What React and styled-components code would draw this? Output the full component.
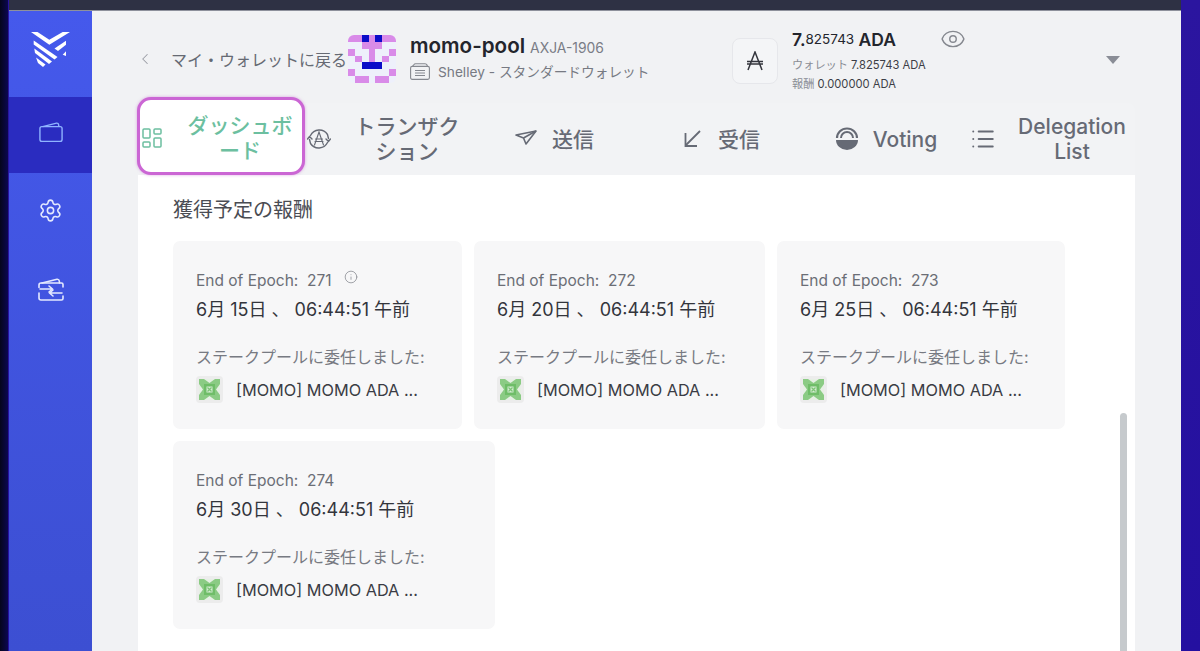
import React from 'react';
import styled, { createGlobalStyle } from 'styled-components';
import { ChevronLeft, Eye, LayoutDashboard, List, Info, Settings } from 'lucide-react';

const GlobalStyle = createGlobalStyle`
  html, body {
    margin: 0;
    padding: 0;
    background: #1a0f8c;
    font-family: "Inter", "Noto Sans CJK JP", sans-serif;
  }
  * { box-sizing: border-box; }
`;

const Desktop = styled.div`
  width: 1200px;
  height: 651px;
  overflow: hidden;
  padding: 0 19px 0 9px;
  background:
    linear-gradient(90deg, #05051c 0, #0b0750 8px, transparent 8px),
    linear-gradient(180deg, #2b159f, #2410a0);
`;

const AppWindow = styled.div`
  height: 651px;
  display: flex;
  flex-direction: column;
`;

const TitleBar = styled.div`
  height: 11px;
  flex: none;
  background: #2e3144;
  border-bottom: 1px solid #8e919c;
`;

const Body = styled.div`
  flex: 1;
  min-height: 0;
  display: flex;
`;

const Sidebar = styled.nav`
  width: 83px;
  flex: none;
  background: linear-gradient(180deg, #4559ec, #3c4fd2);
  display: flex;
  flex-direction: column;
`;

const LogoBox = styled.div`
  height: 86px;
  display: flex;
  justify-content: center;
  padding-top: 20px;
`;

const NavItem = styled.div`
  height: ${({ $h }) => $h}px;
  display: flex;
  align-items: center;
  justify-content: center;
  padding-bottom: ${({ $active }) => ($active ? '5px' : '0')};
  color: ${({ $active }) => ($active ? '#8fb4ff' : '#e4e9ff')};
  background: ${({ $active }) => ($active ? '#2a2cc0' : 'transparent')};
`;

const Main = styled.main`
  flex: 1;
  min-width: 0;
  background: #f1f2f4;
  display: flex;
  flex-direction: column;
`;

const Header = styled.header`
  height: 92px;
  flex: none;
  display: flex;
  align-items: flex-start;
  padding: 24px 0 0 46px;
`;

const BackLink = styled.div`
  display: flex;
  align-items: center;
  height: 48px;
  width: 210px;
  flex: none;
  color: #666a73;
  font-size: 16px;
  gap: 17px;
  white-space: nowrap;
  svg {
    margin-left: -2px;
    color: #9a9da5;
  }
`;

const Avatar = styled.svg`
  width: 48px;
  height: 48px;
  flex: none;
  border-radius: 6px;
  display: block;
`;

const WalletInfo = styled.div`
  width: 336px;
  flex: none;
  padding: 0 0 0 14px;
`;

const WalletTitle = styled.div`
  display: flex;
  align-items: baseline;
  gap: 5px;
  height: 26px;
  margin-top: -2px;
`;

const WalletName = styled.span`
  font-size: 20.6px;
  font-weight: 600;
  color: #23252c;
`;

const WalletCode = styled.span`
  font-size: 13.9px;
  color: #7a7d86;
`;

const WalletType = styled.div`
  display: flex;
  align-items: center;
  gap: 8px;
  margin-top: 2px;
  font-size: 13.7px;
  color: #777a83;
  white-space: nowrap;
  svg { color: #85888f; }
`;

const AdaBox = styled.div`
  width: 46px;
  height: 46px;
  flex: none;
  margin-top: 3px;
  border: 1px solid #e6e7eb;
  border-radius: 8px;
  background: #f4f5f7;
  display: flex;
  align-items: center;
  justify-content: center;
  color: #33353d;
`;

const Balance = styled.div`
  width: 328px;
  flex: none;
  padding-left: 14px;
`;

const BalanceMain = styled.div`
  display: flex;
  align-items: center;
  height: 20px;
  margin: -6px 0 7px;
  font-size: 17.5px;
  font-weight: 600;
  color: #23252c;
  white-space: pre;
  small {
    font-size: 13.5px;
    font-weight: 400;
  }
  svg {
    margin-left: 44px;
    color: #85888f;
  }
`;

const BalanceSub = styled.div`
  font-size: 11.2px;
  line-height: 19px;
  color: #8a8d95;
  white-space: pre;
  b {
    font-weight: 400;
    color: #3c3e46;
  }
`;

const Caret = styled.div`
  width: 0;
  height: 0;
  margin-top: 21px;
  border-left: 7px solid transparent;
  border-right: 7px solid transparent;
  border-top: 8px solid #8a8d96;
`;

const TabsBar = styled.div`
  width: 997px;
  margin-left: 46px;
  height: 72px;
  flex: none;
  display: grid;
  grid-template-columns: repeat(6, 1fr);
  background: #f2f3f5;
  border-radius: 8px 8px 0 0;
`;

const Tab = styled.div`
  position: relative;
  display: flex;
  align-items: center;
  justify-content: center;
  gap: 14px;
  color: ${({ $active }) => ($active ? '#6cbfa0' : '#666a75')};
  svg { flex: none; }
  ${({ $active }) =>
    $active &&
    `
    background: #fff;
    margin: -6px 0 0 -1px;
    padding-top: 3px;
    border: 3px solid #cb66d4;
    border-radius: 14px;
    box-shadow: 0 0 3px rgba(190, 80, 200, 0.5);
    z-index: 1;
  `}
`;

const TabLabel = styled.span`
  max-width: 124px;
  flex: ${({ $wide }) => ($wide ? '0 0 124px' : '0 1 auto')};
  text-align: center;
  font-size: 21px;
  line-height: 25px;
  font-weight: 500;
`;

const Content = styled.section`
  position: relative;
  width: 997px;
  margin-left: 46px;
  flex: 1;
  min-height: 0;
  background: #fff;
  padding: 21px 35px 0;
`;

const SectionTitle = styled.h2`
  margin: 0 0 17px;
  font-size: 20px;
  line-height: 28px;
  font-weight: 400;
  color: #4a4c53;
`;

const CardGrid = styled.div`
  display: flex;
  flex-wrap: wrap;
  gap: 12px;
`;

const Card = styled.article`
  width: ${({ $w }) => $w}px;
  height: 188px;
  padding: 28px 23px 0;
  border-radius: 7px;
  background: #f7f7f8;
`;

const EpochRow = styled.div`
  display: flex;
  align-items: center;
  height: 22px;
  font-size: 15.5px;
  color: #6b6e76;
  white-space: pre;
  svg {
    margin: -7px 0 0 12px;
    color: #85888f;
  }
`;

const DateRow = styled.div`
  margin-top: 6px;
  height: 26px;
  font-size: 18px;
  line-height: 26px;
  color: #33353c;
  white-space: pre;
`;

const DelegatedLabel = styled.div`
  margin-top: 23px;
  height: 22px;
  font-size: 16px;
  line-height: 22px;
  color: #777a82;
  white-space: nowrap;
`;

const PoolRow = styled.div`
  display: flex;
  align-items: center;
  gap: 13px;
  margin-top: 8px;
  font-size: 16.3px;
  color: #3a3c44;
  white-space: nowrap;
`;

const PoolIcon = styled.svg`
  width: 27px;
  height: 27px;
  flex: none;
  display: block;
  border-radius: 4px;
`;

const ScrollThumb = styled.div`
  position: absolute;
  top: 238px;
  bottom: 0;
  right: 8px;
  width: 7px;
  border-radius: 4px 4px 0 0;
  background: #c6cacd;
`;

const WalletIcon = ({ size = 26 }) => (
  <svg width={size} height={size * 0.85} viewBox="0 0 26 22" fill="none" stroke="currentColor" strokeWidth="1.5" strokeLinejoin="round">
    <rect x="1" y="5" width="24" height="16" rx="2" />
    <path d="M4 5 L19 1.2 Q21 1 21.3 3 L21.5 5" />
  </svg>
);

const SwapWalletIcon = () => (
  <svg width="26" height="23" viewBox="0 0 26 23" fill="none" stroke="currentColor" strokeWidth="1.6" strokeLinecap="round" strokeLinejoin="round">
    <path d="M4 5 L19 1.2 Q21 1 21.3 3 L21.5 5" />
    <path d="M25 9 V6.5 Q25 5 23.5 5 H3 Q1 5 1 7 V9.5 M1 15 V20 Q1 22 3 22 H23.5 Q25 22 25 20.5 V18" />
    <path d="M2 11 H14 M11 8 L14.5 11 L11 14" />
    <path d="M24 15 H12 M15 12 L11.5 15 L15 18" />
  </svg>
);

const Logo = () => (
  <svg width="40" height="38" viewBox="0 0 40 38" fill="#fff">
    <polygon points="0,1 6.5,1 18.3,8.8 31.7,1 39,1 18.3,13.8" />
    <polygon points="2.7,9.5 26.5,26 23.5,28.5 2.7,13.6" />
    <polygon points="3.3,17.5 21,30.5 18,33 4,22" />
    <polygon points="5,26.5 14.5,33.5 12,36 7,32" />
    <polygon points="23.5,17.5 35,9.8 35,13.8 27,20" />
    <polygon points="31.7,23.7 35,20.3 35,25" />
  </svg>
);

const AdaGlyph = () => (
  <svg width="18" height="20" viewBox="0 0 18 20" fill="none" stroke="currentColor" strokeWidth="1.5">
    <path d="M2 19 L9 1 L16 19 M1 10.5 H17 M1 13 H17" />
  </svg>
);

const CardListIcon = () => (
  <svg width="20" height="17" viewBox="0 0 20 17" fill="none" stroke="currentColor" strokeWidth="1.1" strokeLinejoin="round">
    <rect x="0.6" y="3.4" width="18.8" height="13" rx="1.6" />
    <path d="M2.5 3.4 L4 1.5 Q4.4 0.8 5.5 0.8 H15 Q16.5 0.8 17 2 L17.4 3.4" />
    <path d="M5 7.5 H15 M5 10 H15 M5 12.5 H15" />
  </svg>
);

const AdaCycleIcon = () => (
  <svg width="24" height="24" viewBox="0 0 24 24" fill="none" stroke="currentColor" strokeWidth="1.4" strokeLinecap="round">
    <path d="M3.5 8.5 A9.8 9.8 0 0 1 20.5 7.5 L21.5 11.5" />
    <path d="M20.5 15.5 A9.8 9.8 0 0 1 3.5 16.5 L2.5 12.5" />
    <path d="M0.5 12 L2.5 9.5 L5 12 M19 12 L21.5 14.5 L23.5 12" />
    <path d="M7.5 18 L12 5 L16.5 18 M8.5 12 H15.5 M8 14.5 H16" strokeWidth="1.1" />
  </svg>
);

const PlaneIcon = () => (
  <svg width="24" height="24" viewBox="0 0 24 24" fill="none" stroke="currentColor" strokeWidth="1.6" strokeLinejoin="round">
    <path d="M2 8 L22 4 L12 17 L9.5 11 Z" />
    <path d="M9.5 11 L22 4" />
  </svg>
);

const ReceiveIcon = () => (
  <svg width="24" height="24" viewBox="0 0 24 24" fill="none" stroke="currentColor" strokeWidth="1.8">
    <path d="M20 4 L6 18" />
    <path d="M5.5 6 V19 H17" />
  </svg>
);

const VotingIcon = () => (
  <svg width="24" height="24" viewBox="0 0 24 24" fill="none" stroke="currentColor">
    <path d="M1 13 H23 A11 10 0 0 1 1 13 Z" fill="currentColor" stroke="none" />
    <path d="M2 11 A10 9.5 0 0 1 22 11" strokeWidth="2.2" />
    <path d="M6 11 A6 6 0 0 1 18 11" strokeWidth="2" />
  </svg>
);

const pinkCells = [
  [0, 0], [1, 0], [3, 0], [5, 0], [6, 0],
  [2, 1], [3, 1], [4, 1],
  [0, 2], [3, 2], [6, 2],
  [1, 3], [3, 3], [5, 3],
  [0, 5], [6, 5],
  [1, 6], [2, 6], [4, 6], [5, 6],
];
const blueCells = [[2, 0], [4, 0], [2, 4], [3, 4], [4, 4]];

const WalletAvatar = () => (
  <Avatar viewBox="0 0 7 7" shapeRendering="crispEdges">
    <rect width="7" height="7" fill="#eef0fb" />
    {pinkCells.map(([x, y]) => (
      <rect key={`p${x}-${y}`} x={x} y={y} width="1" height="1" fill="#d98be8" />
    ))}
    {blueCells.map(([x, y]) => (
      <rect key={`b${x}-${y}`} x={x} y={y} width="1" height="1" fill="#0c0cc8" />
    ))}
  </Avatar>
);

const PoolGlyph = () => (
  <PoolIcon viewBox="0 0 27 27">
    <rect width="27" height="27" fill="#ececec" />
    <polygon points="3,3 24,3 24,24 3,24" fill="#8bcb84" />
    <polygon points="8,3 19,3 13.5,7" fill="#e6f0e4" />
    <polygon points="8,24 19,24 13.5,20" fill="#e6f0e4" />
    <polygon points="3,8 3,19 7,13.5" fill="#e6f0e4" />
    <polygon points="24,8 24,19 20,13.5" fill="#e6f0e4" />
    <rect x="8" y="8" width="11" height="11" fill="#6fbd68" />
    <rect x="10.5" y="10.5" width="6" height="6" fill="#d4ecd1" />
    <path d="M11.5 11.5 L15.5 15.5 M15.5 11.5 L11.5 15.5" stroke="#7cc475" strokeWidth="1.2" />
  </PoolIcon>
);

const tabs = [
  { label: 'ダッシュボード', icon: <LayoutDashboard size={24} strokeWidth={1.5} />, active: true, wide: true },
  { label: 'トランザクション', icon: <AdaCycleIcon />, wide: true },
  { label: '送信', icon: <PlaneIcon /> },
  { label: '受信', icon: <ReceiveIcon /> },
  { label: 'Voting', icon: <VotingIcon /> },
  { label: 'Delegation List', icon: <List size={26} strokeWidth={1.8} />, wide: true },
];

const rewards = [
  { epoch: 271, date: '6月 15日 、 06:44:51 午前', width: 289, info: true },
  { epoch: 272, date: '6月 20日 、 06:44:51 午前', width: 291 },
  { epoch: 273, date: '6月 25日 、 06:44:51 午前', width: 288 },
  { epoch: 274, date: '6月 30日 、 06:44:51 午前', width: 322 },
];

const App = () => (
  <>
    <GlobalStyle />
    <Desktop>
      <AppWindow>
        <TitleBar />
        <Body>
          <Sidebar>
            <LogoBox>
              <Logo />
            </LogoBox>
            <NavItem $active $h={76}>
              <WalletIcon size={24} />
            </NavItem>
            <NavItem $h={74}>
              <Settings size={25} strokeWidth={1.5} />
            </NavItem>
            <NavItem $h={84}>
              <SwapWalletIcon />
            </NavItem>
          </Sidebar>
          <Main>
            <Header>
              <BackLink>
                <ChevronLeft size={18} strokeWidth={1.4} />
                マイ・ウォレットに戻る
              </BackLink>
              <WalletAvatar />
              <WalletInfo>
                <WalletTitle>
                  <WalletName>momo-pool</WalletName>
                  <WalletCode>AXJA-1906</WalletCode>
                </WalletTitle>
                <WalletType>
                  <CardListIcon />
                  Shelley - スタンダードウォレット
                </WalletType>
              </WalletInfo>
              <AdaBox>
                <AdaGlyph />
              </AdaBox>
              <Balance>
                <BalanceMain>
                  7.<small>825743</small> ADA
                  <Eye size={26} strokeWidth={1.3} />
                </BalanceMain>
                <BalanceSub>
                  ウォレット <b>7.825743 ADA</b>
                </BalanceSub>
                <BalanceSub>
                  報酬 <b>0.000000 ADA</b>
                </BalanceSub>
              </Balance>
              <Caret />
            </Header>
            <TabsBar>
              {tabs.map((tab) => (
                <Tab key={tab.label} $active={tab.active}>
                  {tab.icon}
                  <TabLabel $wide={tab.wide}>{tab.label}</TabLabel>
                </Tab>
              ))}
            </TabsBar>
            <Content>
              <SectionTitle>獲得予定の報酬</SectionTitle>
              <CardGrid>
                {rewards.map((reward) => (
                  <Card key={reward.epoch} $w={reward.width}>
                    <EpochRow>
                      End of Epoch:  {reward.epoch}
                      {reward.info && <Info size={14} strokeWidth={1.3} />}
                    </EpochRow>
                    <DateRow>{reward.date}</DateRow>
                    <DelegatedLabel>ステークプールに委任しました:</DelegatedLabel>
                    <PoolRow>
                      <PoolGlyph />
                      [MOMO] MOMO ADA ...
                    </PoolRow>
                  </Card>
                ))}
              </CardGrid>
              <ScrollThumb />
            </Content>
          </Main>
        </Body>
      </AppWindow>
    </Desktop>
  </>
);

export default App;
